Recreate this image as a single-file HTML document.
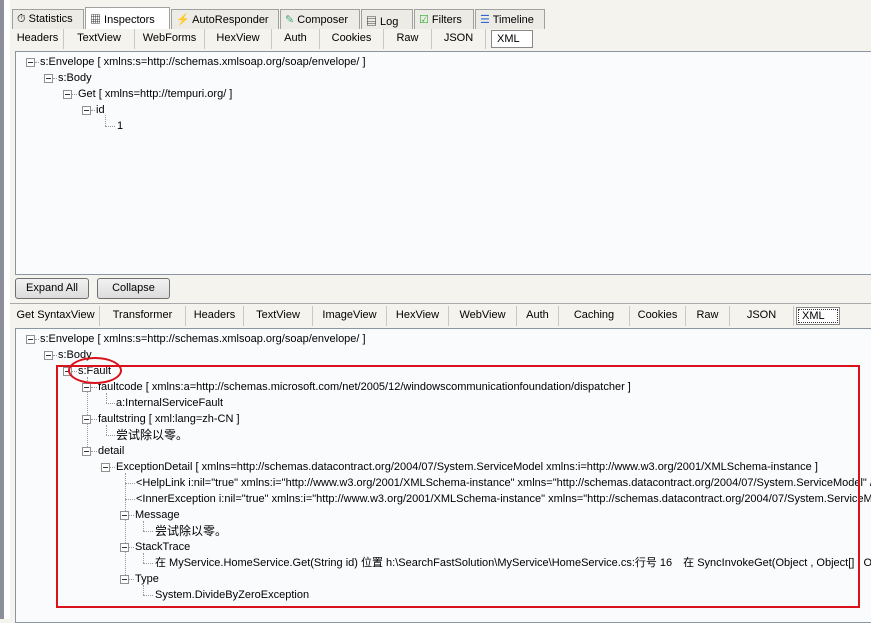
<!DOCTYPE html>
<html><head><meta charset="utf-8"><style>
*{margin:0;padding:0;box-sizing:border-box}
body{width:871px;height:619px;overflow:hidden;background:#f4f3ee;font-family:"Liberation Sans","Noto Sans CJK SC",sans-serif;font-size:11px;color:#000;position:relative}
.abs{position:absolute;white-space:nowrap}
.lbar{position:absolute;left:0;top:0;width:4px;height:619px;background:#8a8f99}
.tab{position:absolute;top:9px;height:20px;border:1px solid #a0a0a0;border-bottom:none;background:#ecebe6;padding:3px 4px 0 4px;font-size:11px}
.tab.sel{background:#fff;top:7px;height:22px}
.sub{position:absolute;height:20px;border-right:1px solid #c8c8c8;padding-top:3px;text-align:center;font-size:11px}
.panel{position:absolute;background:#f9fbfd;border:1px solid #8c96a3}
.btn{position:absolute;height:21px;border:1px solid #707070;border-radius:3px;background:linear-gradient(#f2f2f2,#dcdcdc);padding-top:3px;text-align:center}
.t{position:absolute;white-space:nowrap;line-height:16px;height:16px}
.bx{position:absolute;width:9px;height:9px;border:1px solid #919191;background:#fff}
.bx:after{content:"";position:absolute;left:1px;top:3px;width:5px;height:1px;background:#333}
.dl{position:absolute;border-left:1px dotted #999}
.dh{position:absolute;border-top:1px dotted #999}
</style></head><body>
<div style="position:absolute;left:0;top:0;width:871px;height:8px;background:#f4f3ee"></div>
<div class="lbar"></div>
<div style="position:absolute;left:4px;top:0;width:6px;height:619px;background:#fff"></div>

<div class="tab" style="left:12px;width:72px">⏱ Statistics</div>
<div class="tab sel" style="left:85px;width:85px">▦ Inspectors</div>
<div class="tab" style="left:171px;width:108px"><span style="color:#888">⚡</span> AutoResponder</div>
<div class="tab" style="left:280px;width:80px"><span style="color:#4a7">✎</span> Composer</div>
<div class="tab" style="left:361px;width:52px">▤ Log</div>
<div class="tab" style="left:414px;width:60px"><span style="color:#3a3">☑</span> Filters</div>
<div class="tab" style="left:475px;width:70px"><span style="color:#36c">☰</span> Timeline</div>

<div style="position:absolute;left:10px;top:29px;width:861px;height:21px;background:#f4f3ee"></div>
<div class="sub" style="left:12px;top:29px;width:52px">Headers</div>
<div class="sub" style="left:64px;top:29px;width:71px">TextView</div>
<div class="sub" style="left:135px;top:29px;width:70px">WebForms</div>
<div class="sub" style="left:205px;top:29px;width:67px">HexView</div>
<div class="sub" style="left:272px;top:29px;width:48px">Auth</div>
<div class="sub" style="left:320px;top:29px;width:64px">Cookies</div>
<div class="sub" style="left:384px;top:29px;width:48px">Raw</div>
<div class="sub" style="left:432px;top:29px;width:54px">JSON</div>
<div class="abs" style="left:491px;top:30px;width:42px;height:18px;border:1px solid #888;background:#fff;padding:2px 0 0 5px">XML</div>

<div class="panel" style="left:15px;top:51px;width:860px;height:224px"></div>
<!-- top tree -->
<div class="bx" style="left:26px;top:58px"></div><div class="dh" style="left:35px;top:62px;width:4px"></div>
<div class="t" style="left:40px;top:54px">s:Envelope [ xmlns:s=http://schemas.xmlsoap.org/soap/envelope/ ]</div>
<div class="bx" style="left:44px;top:74px"></div><div class="dh" style="left:53px;top:78px;width:4px"></div>
<div class="t" style="left:58px;top:70px">s:Body</div>
<div class="bx" style="left:63px;top:90px"></div><div class="dh" style="left:72px;top:94px;width:5px"></div>
<div class="t" style="left:78px;top:86px">Get [ xmlns=http://tempuri.org/ ]</div>
<div class="bx" style="left:82px;top:106px"></div><div class="dh" style="left:91px;top:110px;width:4px"></div>
<div class="t" style="left:96px;top:102px">id</div>
<div class="dl" style="left:105px;top:115px;height:11px"></div><div class="dh" style="left:105px;top:126px;width:10px"></div>
<div class="t" style="left:117px;top:118px">1</div>

<div class="btn" style="left:15px;top:278px;width:74px">Expand All</div>
<div class="btn" style="left:97px;top:278px;width:73px">Collapse</div>
<div style="position:absolute;left:10px;top:303px;width:861px;height:1px;background:#aaa"></div>

<div class="sub" style="left:12px;top:306px;width:88px">Get SyntaxView</div>
<div class="sub" style="left:100px;top:306px;width:86px">Transformer</div>
<div class="sub" style="left:186px;top:306px;width:58px">Headers</div>
<div class="sub" style="left:244px;top:306px;width:69px">TextView</div>
<div class="sub" style="left:313px;top:306px;width:74px">ImageView</div>
<div class="sub" style="left:387px;top:306px;width:62px">HexView</div>
<div class="sub" style="left:449px;top:306px;width:68px">WebView</div>
<div class="sub" style="left:517px;top:306px;width:42px">Auth</div>
<div class="sub" style="left:559px;top:306px;width:71px">Caching</div>
<div class="sub" style="left:630px;top:306px;width:56px">Cookies</div>
<div class="sub" style="left:686px;top:306px;width:44px">Raw</div>
<div class="sub" style="left:730px;top:306px;width:64px">JSON</div>
<div class="abs" style="left:796px;top:307px;width:44px;height:18px;border:1px solid #888;background:#fff;padding:2px 0 0 5px;outline:1px dotted #333;outline-offset:-3px">XML</div>

<div class="panel" style="left:15px;top:328px;width:860px;height:295px"></div>
<!-- bottom tree -->
<div class="bx" style="left:26px;top:335px"></div><div class="dh" style="left:35px;top:339px;width:4px"></div>
<div class="t" style="left:40px;top:331px">s:Envelope [ xmlns:s=http://schemas.xmlsoap.org/soap/envelope/ ]</div>
<div class="bx" style="left:44px;top:351px"></div><div class="dh" style="left:53px;top:355px;width:4px"></div>
<div class="t" style="left:58px;top:347px">s:Body</div>
<div class="bx" style="left:63px;top:367px"></div><div class="dh" style="left:72px;top:371px;width:5px"></div>
<div class="t" style="left:78px;top:363px">s:Fault</div>
<div class="dl" style="left:87px;top:377px;height:72px"></div>
<div class="bx" style="left:82px;top:383px"></div><div class="dh" style="left:91px;top:387px;width:6px"></div>
<div class="t" style="left:98px;top:379px">faultcode [ xmlns:a=http://schemas.microsoft.com/net/2005/12/windowscommunicationfoundation/dispatcher ]</div>
<div class="dl" style="left:106px;top:393px;height:10px"></div><div class="dh" style="left:106px;top:403px;width:9px"></div>
<div class="t" style="left:116px;top:395px">a:InternalServiceFault</div>
<div class="bx" style="left:82px;top:415px"></div><div class="dh" style="left:91px;top:419px;width:6px"></div>
<div class="t" style="left:98px;top:411px">faultstring [ xml:lang=zh-CN ]</div>
<div class="dl" style="left:106px;top:425px;height:10px"></div><div class="dh" style="left:106px;top:435px;width:9px"></div>
<div class="t" style="left:116px;top:427px;font-size:12px">尝试除以零。</div>
<div class="bx" style="left:82px;top:447px"></div><div class="dh" style="left:91px;top:451px;width:6px"></div>
<div class="t" style="left:98px;top:443px">detail</div>
<div class="bx" style="left:101px;top:463px"></div><div class="dh" style="left:110px;top:467px;width:5px"></div>
<div class="t" style="left:116px;top:459px">ExceptionDetail [ xmlns=http://schemas.datacontract.org/2004/07/System.ServiceModel xmlns:i=http://www.w3.org/2001/XMLSchema-instance ]</div>
<div class="dl" style="left:125px;top:473px;height:108px"></div>
<div class="dh" style="left:125px;top:483px;width:10px"></div>
<div class="t" style="left:136px;top:475px">&lt;HelpLink i:nil="true" xmlns:i="http://www.w3.org/2001/XMLSchema-instance" xmlns="http://schemas.datacontract.org/2004/07/System.ServiceModel" /&gt;</div>
<div class="dh" style="left:125px;top:499px;width:10px"></div>
<div class="t" style="left:136px;top:491px">&lt;InnerException i:nil="true" xmlns:i="http://www.w3.org/2001/XMLSchema-instance" xmlns="http://schemas.datacontract.org/2004/07/System.ServiceModel" /&gt;</div>
<div class="bx" style="left:120px;top:511px"></div><div class="dh" style="left:129px;top:515px;width:5px"></div>
<div class="t" style="left:135px;top:507px">Message</div>
<div class="dl" style="left:143px;top:521px;height:10px"></div><div class="dh" style="left:143px;top:531px;width:10px"></div>
<div class="t" style="left:155px;top:523px;font-size:12px">尝试除以零。</div>
<div class="bx" style="left:120px;top:543px"></div><div class="dh" style="left:129px;top:547px;width:5px"></div>
<div class="t" style="left:135px;top:539px">StackTrace</div>
<div class="dl" style="left:143px;top:553px;height:10px"></div><div class="dh" style="left:143px;top:563px;width:10px"></div>
<div class="t" style="left:155px;top:555px">在 MyService.HomeService.Get(String id) 位置 h:\SearchFastSolution\MyService\HomeService.cs:行号 16　在 SyncInvokeGet(Object , Object[] , Object[] )</div>
<div class="bx" style="left:120px;top:575px"></div><div class="dh" style="left:129px;top:579px;width:5px"></div>
<div class="t" style="left:135px;top:571px">Type</div>
<div class="dl" style="left:143px;top:585px;height:10px"></div><div class="dh" style="left:143px;top:595px;width:10px"></div>
<div class="t" style="left:155px;top:587px">System.DivideByZeroException</div>

<div style="position:absolute;left:56px;top:365px;width:804px;height:243px;border:2px solid #d9121b"></div>
<div style="position:absolute;left:68px;top:357px;width:54px;height:27px;border:2px solid #d9121b;border-radius:50%"></div>
</body></html>
